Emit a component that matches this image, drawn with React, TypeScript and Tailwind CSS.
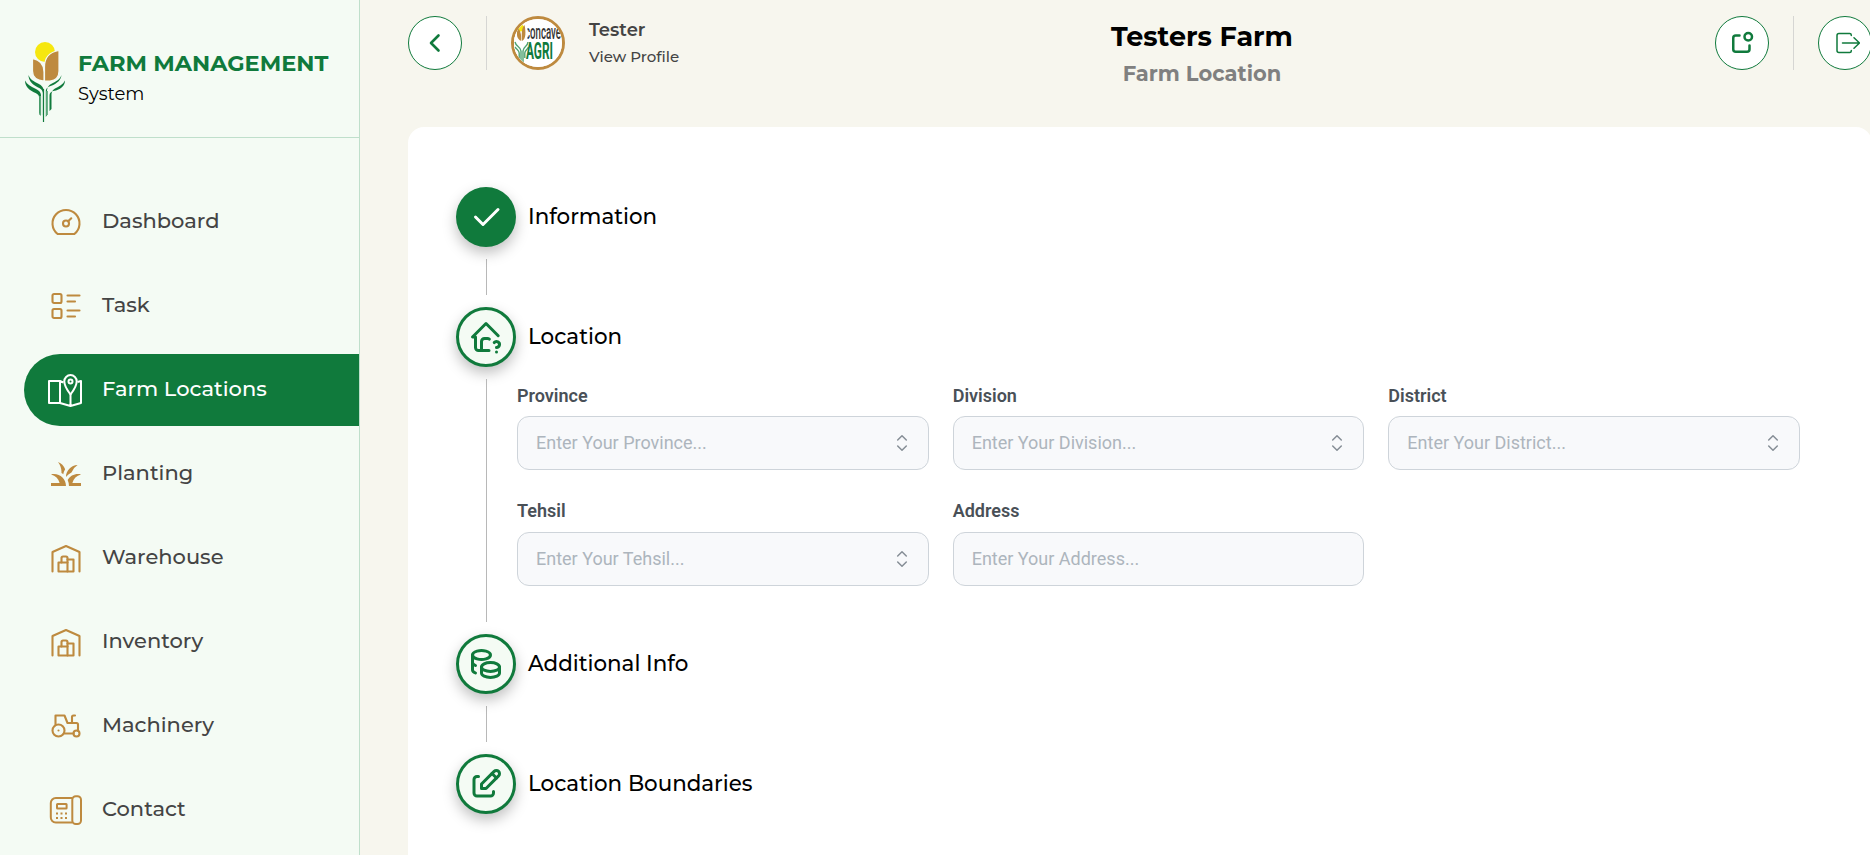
import React from "react";
import {
  TbBuildingWarehouse,
  TbCheck,
  TbCoins,
  TbDashboard,
  TbEdit,
  TbHomeQuestion,
  TbListDetails,
  TbNotification,
  TbTractor,
} from "react-icons/tb";
import { MdGrass } from "react-icons/md";

function Logo() {
  return (
    <svg width="42" height="82" viewBox="0 0 42 82" className="shrink-0">
      <circle cx="20" cy="11" r="10" fill="#f6e70f" />
      <path d="M19.5 40V26C19.5 17 24 11 34 9.500V30C34 36 30 39.500 25 40Z" fill="#be8a3f" stroke="#f4fbf4" strokeWidth="1.200" />
      <path d="M19 40C12 39.500 7.500 36 7.500 30V17.500C15 19 19 24 19 31Z" fill="#be8a3f" stroke="#f4fbf4" strokeWidth="1.200" />
      <g fill="#107a3c">
        <path d="M3.500 34C5 38.500 9 40.500 13 42.500C17 44.500 19 47 19 51V80L17.900 74V52C17.500 48 14 47 10.500 45C6.500 42.500 3.500 39 3.500 34Z" />
        <path d="M0 39.500C2 43.500 6 45.500 10 47.500C14 49.500 16 51 16 55V75L14 72V56C14 53 11 52.500 7.500 50.500C3 48 0 44.500 0 39.500Z" />
        <path d="M36.500 34C35 38.500 31 40.500 27 42.500C23 44.500 22 47 22 51V74L20.800 76V51C20.800 47 23 45.500 27 44.500C32 42.500 36 39 36.500 34Z" />
        <path d="M40 39.500C38 43.500 34 45.500 30 47.500C27 49.500 26.500 51 26.500 55V68L24.500 70V55C24.500 51 27 50 31 49.500C36 48 40 44.500 40 39.500Z" />
      </g>
      <path d="M18.500 48V81" stroke="#107a3c" strokeWidth="1.200" />
      <path d="M15.200 55V74M22 50V74" stroke="#5fab7e" strokeWidth="1.800" />
    </svg>
  );
}

function FieldMap() {
  return (
    <svg width="36" height="36" viewBox="0 0 36 36" fill="none" stroke="currentColor" strokeWidth="2" strokeLinejoin="round">
      <path d="M15.500 10.500L12 9H1V31H12L22.500 34L33 31V9L29.500 10M12 9V31M22.500 22V34" />
      <path d="M22.500 22.500C19 18 16.300 13.500 16.300 9.300a6.200 6.200 0 0 1 12.400 0C28.700 13.500 26 18 22.500 22.500Z" />
      <circle cx="22.500" cy="9.500" r="2" />
    </svg>
  );
}

function DeskPhone() {
  return (
    <svg width="36" height="36" viewBox="0 0 36 36" fill="none" stroke="currentColor" strokeWidth="2">
      <path d="M24.300 6H7.800A5 5 0 0 0 2.800 11V25A5 5 0 0 0 7.800 30.500H24.300" />
      <rect x="24.300" y="4.200" width="8.700" height="27.800" rx="3.500" />
      <rect x="9" y="12" width="9.600" height="4.400" rx="0.500" />
      <path d="M8 21.500h2M12.500 21.500h2M17 21.500h2M8 26h2M12.500 26h2M17 26h2" />
    </svg>
  );
}

function LogoutGlyph() {
  return (
    <svg width="30" height="30" viewBox="0 0 30 30" fill="none" stroke="currentColor" strokeWidth="1.500" strokeLinecap="round" strokeLinejoin="round">
      <path d="M21.300 7.500V7A1.600 1.600 0 0 0 19.700 5.500H9A2 2 0 0 0 7 7.500V22.500A2 2 0 0 0 9 24.500H19.700A1.600 1.600 0 0 0 21.300 23V22.500" />
      <path d="M12.500 15H29.500M24 9.800L29.500 15L24 20.200" />
    </svg>
  );
}

function AvatarPicture() {
  return (
    <svg width="48" height="48" viewBox="0 0 48 48">
      <rect width="48" height="48" fill="#fff" />
      <text x="11" y="20" textLength="36" lengthAdjust="spacingAndGlyphs" className="fill-[#333] font-[Roboto] text-[20px] font-medium">concave</text>
      <rect width="13.500" height="48" fill="#fff" />
      <circle cx="6.500" cy="9" r="3.500" fill="#f6e70f" />
      <path d="M7.300 22C2.500 20 2.500 16 3.500 9C6.500 11 7.300 15 7.300 22Z" fill="#be8a3f" />
      <path d="M8 22C7.500 15 7.500 9 10.500 6C12 13 12 20 8 22Z" fill="#be8a3f" />
      <path d="M1 23C2 28 6.500 27 7 32V43M14 23C13.500 28 9.500 27 9 32V43M1 28C3 31 5 31 5.200 34V39M14.500 28C13 31 11 31 10.800 34V39" fill="none" stroke="#4fa373" strokeWidth="1.400" />
      <text x="12" y="40" textLength="27" lengthAdjust="spacingAndGlyphs" className="fill-[#107a3c] font-[Roboto] text-[23px] font-bold">AGRI</text>
    </svg>
  );
}

type NavItem = { label: string; icon: React.ReactNode; active?: boolean };

const nav: NavItem[] = [
  { label: "Dashboard", icon: <TbDashboard size={36} strokeWidth={1.4} /> },
  { label: "Task", icon: <TbListDetails size={36} strokeWidth={1.4} /> },
  { label: "Farm Locations", icon: <FieldMap />, active: true },
  { label: "Planting", icon: <MdGrass size={36} /> },
  { label: "Warehouse", icon: <TbBuildingWarehouse size={36} strokeWidth={1.4} /> },
  { label: "Inventory", icon: <TbBuildingWarehouse size={36} strokeWidth={1.4} /> },
  { label: "Machinery", icon: <TbTractor size={36} strokeWidth={1.4} /> },
  { label: "Contact", icon: <DeskPhone /> },
];

function Sidebar() {
  return (
    <aside className="flex h-full w-[360px] shrink-0 flex-col border-r border-[#bfdfcb] bg-[#f4fbf4]">
      <div className="flex h-[138px] shrink-0 border-b border-[#bfdfcb] pt-[41px] pl-[25px]">
        <Logo />
        <div className="pt-[7px] pl-[11px]">
          <div className="text-[22.500px] leading-[30px] font-bold whitespace-nowrap text-[#107a3c]">FARM MANAGEMENT</div>
          <div className="mt-[3px] text-[18px] leading-[26px] text-black">System</div>
        </div>
      </div>
      <nav className="flex flex-col gap-3 pt-12 pl-6">
        {nav.map((n) => (
          <a
            key={n.label}
            className={
              n.active
                ? "flex h-[72px] shrink-0 items-center rounded-l-full bg-[#107a3c] pl-6 text-white"
                : "flex h-[72px] shrink-0 items-center pl-6 text-[#be8a3f]"
            }
          >
            {n.icon}
            <span
              className={`ml-[18px] pb-[3px] text-[21px] leading-7 font-medium whitespace-nowrap ${n.active ? "text-white" : "text-[#444]"}`}
            >
              {n.label}
            </span>
          </a>
        ))}
      </nav>
    </aside>
  );
}

function RoundButton({ children }: { children: React.ReactNode }) {
  return (
    <button className="flex size-[54px] shrink-0 items-center justify-center rounded-full border border-[#107a3c] bg-white text-[#107a3c]">
      {children}
    </button>
  );
}

function Header() {
  return (
    <header className="flex h-[127px] shrink-0 items-start pt-4">
      <div className="flex w-[644px] shrink-0">
        <RoundButton>
          <svg width="24" height="24" viewBox="0 0 24 24" fill="none" stroke="currentColor" strokeWidth="2.600" strokeLinecap="round" strokeLinejoin="round">
            <path d="M15.500 4.500L8 12L15.500 19.500" />
          </svg>
        </RoundButton>
        <div className="ml-6 h-[54px] w-px bg-[#d6d6d3]" />
        <div className="ml-6 size-[54px] overflow-hidden rounded-full border-3 border-[#be8a3f]">
          <AvatarPicture />
        </div>
        <div className="ml-6 text-[#444]">
          <div className="mt-[2px] text-[18px] leading-6 font-semibold">Tester</div>
          <div className="mt-[5px] text-[15px] leading-5 font-medium">View Profile</div>
        </div>
      </div>
      <div className="flex w-[300px] shrink-0 flex-col items-center">
        <h1 className="mt-[5px] text-[27px] leading-8 font-bold text-black">Testers Farm</h1>
        <h2 className="mt-[7px] text-[21px] leading-7 font-bold text-[#808080]">Farm Location</h2>
      </div>
      <div className="ml-auto flex">
        <RoundButton>
          <TbNotification size={30} />
        </RoundButton>
        <div className="ml-6 h-[54px] w-px bg-[#d6d6d3]" />
        <div className="ml-6">
          <RoundButton>
            <LogoutGlyph />
          </RoundButton>
        </div>
      </div>
    </header>
  );
}

function Step({ label, icon, done }: { label: string; icon: React.ReactNode; done?: boolean }) {
  return (
    <div className="flex h-[60px] items-center">
      <div
        className={
          done
            ? "flex size-[60px] items-center justify-center rounded-full bg-[#107a3c] text-white shadow-[0_6px_14px_rgba(0,0,0,0.25)]"
            : "flex size-[60px] items-center justify-center rounded-full border-3 border-[#107a3c] bg-[#f4fbf4] text-[#107a3c] shadow-[0_6px_14px_rgba(0,0,0,0.25)]"
        }
      >
        {icon}
      </div>
      <span className="ml-[12px] pb-[2px] text-[21.400px] leading-7 font-medium text-black">{label}</span>
    </div>
  );
}

function Connector() {
  return <div className="my-3 ml-[30px] h-9 w-px bg-[#b8b8b8]" />;
}

function Field({ label, select }: { label: string; select?: boolean }) {
  return (
    <label className="flex flex-col font-[Roboto,sans-serif]">
      <span className="text-[18px] leading-[27px] font-semibold text-[#495057]">{label}</span>
      <span className="mt-[7.600px] flex h-[54px] items-center justify-between rounded-xl border border-[#ced4da] bg-[#f8f9fb] pr-[17px] pl-[18px]">
        <span className="pb-[1.400px] text-[18px] text-[#adb5bd]">{`Enter Your ${label}...`}</span>
        {select && (
          <svg width="18" height="18" viewBox="0 0 18 18" fill="none" stroke="#868e96" strokeWidth="1.500" strokeLinecap="round" strokeLinejoin="round">
            <path d="M4.700 6L9 1.700L13.300 6M4.700 12L9 16.300L13.300 12" />
          </svg>
        )}
      </span>
    </label>
  );
}

export default function App() {
  return (
    <div className="flex h-screen w-full overflow-hidden bg-[#f7f6ee] font-[Montserrat,Inter,sans-serif]">
      <Sidebar />
      <div className="flex w-[1512px] shrink-0 flex-col pl-12">
        <Header />
        <main className="w-[1464px] grow rounded-t-2xl bg-white pt-[60px] pl-12">
          <Step label="Information" icon={<TbCheck size={36} />} done />
          <Connector />
          <Step label="Location" icon={<TbHomeQuestion size={36} />} />
          <div className="my-3 ml-[30px] flex h-[243px]">
            <div className="w-px bg-[#b8b8b8]" />
            <div className="ml-[30px] grid w-[1283px] grid-cols-3 content-start gap-x-6 gap-y-[26.900px] pt-[2.700px]">
              <Field label="Province" select />
              <Field label="Division" select />
              <Field label="District" select />
              <Field label="Tehsil" select />
              <Field label="Address" />
            </div>
          </div>
          <Step label="Additional Info" icon={<TbCoins size={36} />} />
          <Connector />
          <Step label="Location Boundaries" icon={<TbEdit size={36} />} />
        </main>
      </div>
    </div>
  );
}
